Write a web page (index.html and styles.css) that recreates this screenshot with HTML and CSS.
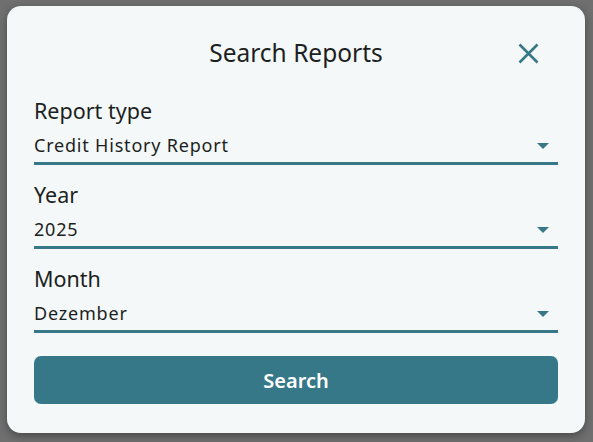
FILE: index.html
```html
<!DOCTYPE html>
<html lang="en">
<head>
<meta charset="utf-8">
<title>Search Reports</title>
<link rel="stylesheet" href="styles.css">
</head>
<body>
<div class="modal">
  <div class="header">
    <span></span>
    <h1 class="title">Search Reports</h1>
    <button class="close" aria-label="Close">
      <svg width="21" height="21" viewBox="0 0 21 21"><path d="M1.5 1.5 L19.5 19.5 M19.5 1.5 L1.5 19.5" stroke="#367887" stroke-width="2.6" fill="none"/></svg>
    </button>
  </div>
  <div class="field">
    <div class="label">Report type</div>
    <div class="select"><span class="value">Credit History Report</span><span class="arrow"></span></div>
  </div>
  <div class="field">
    <div class="label">Year</div>
    <div class="select"><span class="value">2025</span><span class="arrow"></span></div>
  </div>
  <div class="field">
    <div class="label">Month</div>
    <div class="select"><span class="value">Dezember</span><span class="arrow"></span></div>
  </div>
  <button class="search">Search</button>
</div>
</body>
</html>
```

FILE: styles.css
```css
html, body {
  margin: 0;
  padding: 0;
}
body {
  background: #6f6f6f;
  width: 593px;
  height: 442px;
  padding: 6px 8px 9px 7px;
  box-sizing: border-box;
  font-family: "Noto Sans", "Open Sans", sans-serif;
  color: #1c1f21;
}
.modal {
  width: 578px;
  height: 427px;
  box-sizing: border-box;
  background: #f4f8f9;
  border-radius: 14px;
  box-shadow: 0 3px 8px rgba(0,0,0,0.35);
  padding: 31px 27px 29px 27px;
  display: flex;
  flex-direction: column;
}
.header {
  display: grid;
  grid-template-columns: 1fr auto 1fr;
  align-items: center;
  height: 32px;
  margin-bottom: 28px;
}
.title {
  margin: 0;
  font-size: 24.5px;
  font-weight: 400;
  line-height: 32px;
}
.close {
  justify-self: end;
  margin-right: 19px;
  background: none;
  border: 0;
  padding: 0;
  width: 21px;
  height: 21px;
  display: flex;
}
.field {
  margin-bottom: 16px;
}
.label {
  font-size: 21.5px;
  line-height: 28px;
}
.select {
  margin-top: 8px;
  display: flex;
  align-items: center;
  justify-content: space-between;
  padding-bottom: 5px;
  border-bottom: 3px solid #367887;
}
.value {
  font-size: 18px;
  line-height: 24px;
  letter-spacing: 0.8px;
}
.arrow {
  width: 0;
  height: 0;
  border-left: 6px solid transparent;
  border-right: 6px solid transparent;
  border-top: 6px solid #367887;
  margin-right: 9px;
  margin-top: 2px;
}
.search {
  margin-top: 7px;
  height: 48px;
  background: #367887;
  border: 0;
  border-radius: 7px;
  color: #ffffff;
  font-family: "Noto Sans", "Open Sans", sans-serif;
  font-size: 20px;
  font-weight: 600;
}
```
